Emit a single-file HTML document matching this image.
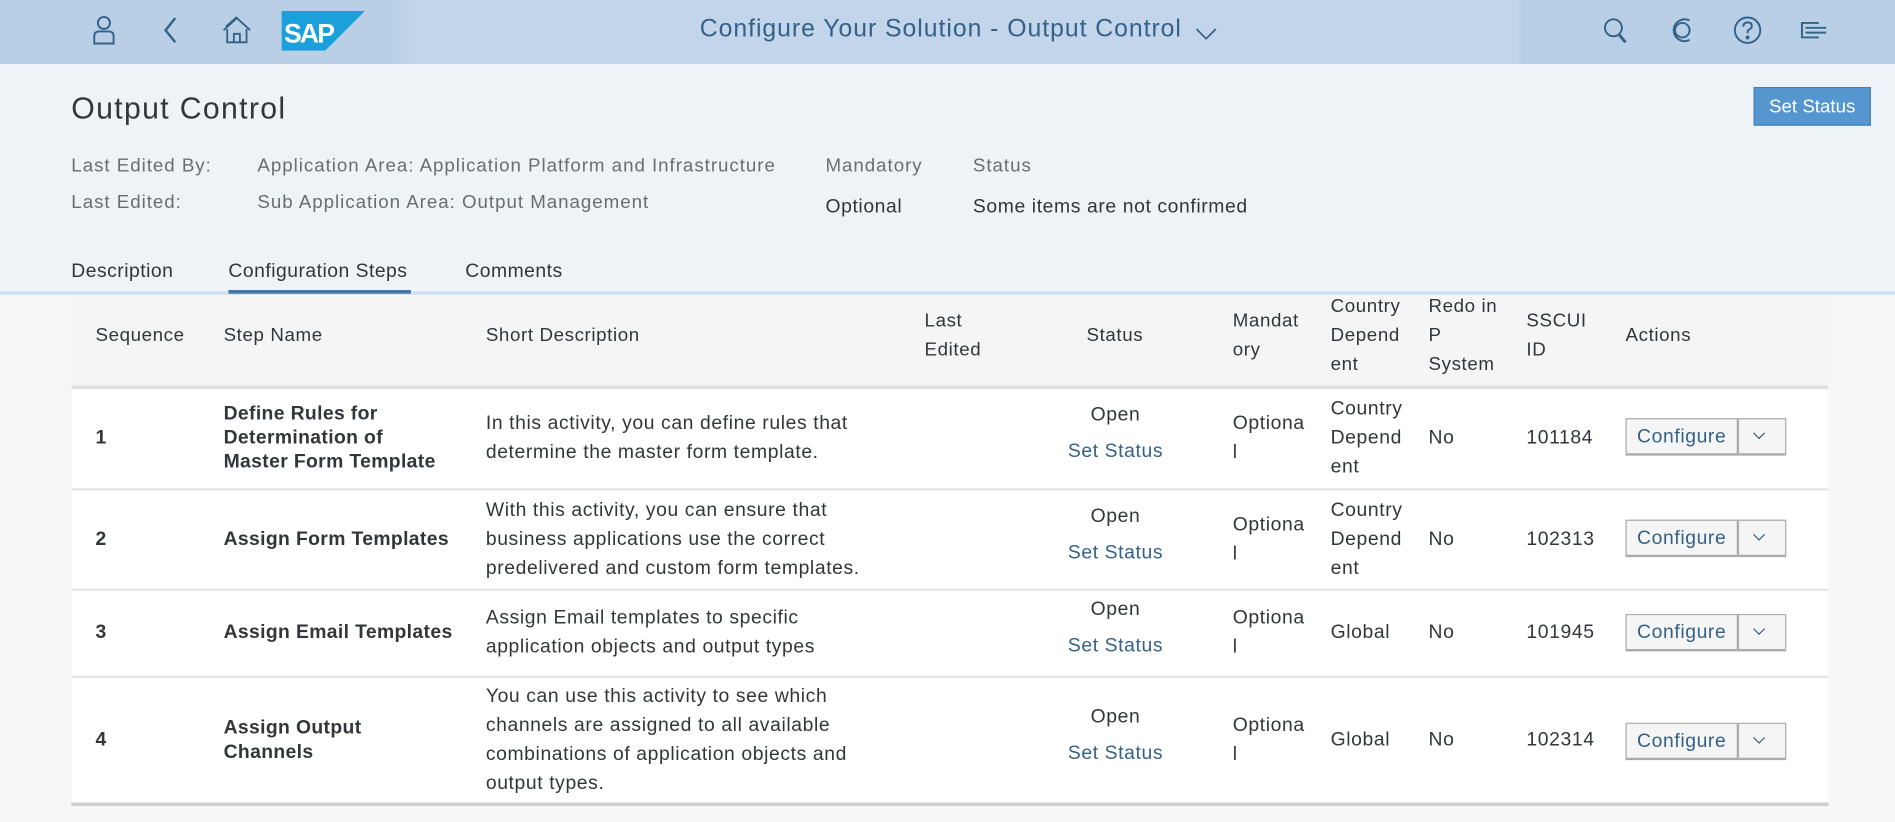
<!DOCTYPE html>
<html><head><meta charset="utf-8"><style>
*{margin:0;padding:0;box-sizing:border-box}
html,body{width:1895px;height:822px;overflow:hidden;background:#f7f7f7;font-family:"Liberation Sans",Arial,sans-serif;color:#32363a}
#w{position:absolute;left:0;top:0;width:1568px;height:680px;transform:scale(1.20855);transform-origin:0 0;background:#f7f7f7;letter-spacing:0.5px}
.a{position:absolute;white-space:nowrap}
#hdr{position:absolute;left:0;top:0;width:1568px;height:53px;background:linear-gradient(90deg,#b9cfe6 0,#b9cfe6 325px,#c2d5ea 340px,#c2d5ea 1255px,#b9cfe6 1260px)}
.ic{position:absolute;top:12px}
#obj{position:absolute;left:0;top:53px;width:1568px;height:190px;background:#eef3f8}
.lbl{font-size:15.5px;color:#6a6d70;letter-spacing:0.8px}
.tab{font-size:16px;color:#32363a;top:216px;letter-spacing:0.4px}
#tbl{position:absolute;left:59px;top:246px;width:1454px;height:421px;background:#fff}
.th{font-size:15.5px;color:#32363a;line-height:24px;position:absolute;white-space:nowrap}
.row{position:absolute;left:0;width:1454px;border-bottom:2px solid #e5e5e5}
.c{position:absolute;top:0;height:100%;display:flex;align-items:center;font-size:16px;line-height:24px;white-space:nowrap}
.st{flex-direction:column;justify-content:center;align-items:center;top:-4px}
.b{font-weight:bold;line-height:20px;font-size:16px;letter-spacing:0.3px}
.lnk{color:#346187}
.btn{position:absolute;left:1286px;width:133px;height:31px;border:1px solid #ababab;border-bottom:2px solid #ababab;background:#f5f5f5;color:#346187;font-size:16px}
.btn span{position:absolute;left:0;top:0;width:93px;height:28px;line-height:29px;text-align:center;border-right:2px solid #ababab}
.btn i{position:absolute;left:106px;top:8px;width:7px;height:7px;border-right:1px solid #346187;border-bottom:1px solid #346187;transform:rotate(45deg);}
</style></head><body><div id="w">
<div id="hdr">
<svg class="ic" style="left:76px" width="20" height="26" viewBox="0 0 20 26" fill="none" stroke="#346187" stroke-width="1.6"><circle cx="10" cy="7" r="5"/><path d="M2 24 V18 Q2 14 6 14 H14 Q18 14 18 18 V24 Z"/></svg>
<svg class="ic" style="left:134px" width="14" height="26" viewBox="0 0 14 26" fill="none" stroke="#346187" stroke-width="2"><path d="M11 3 L3 13 L11 23"/></svg>
<svg class="ic" style="left:184px" width="24" height="26" viewBox="0 0 24 26" fill="none" stroke="#346187" stroke-width="1.5"><path d="M1 13 L12 3 L23 13"/><path d="M4 12 V23 H20 V12"/><path d="M9.5 23 V16 H14.5 V23"/><path d="M3 10 L12 2"/></svg>
<svg style="position:absolute;left:233px;top:9px" width="69" height="33" viewBox="0 0 69 33"><path d="M0 0 H69 L36 33 H0 Z" fill="#1ba0dc"/><text x="2" y="26" font-family="Liberation Sans" font-weight="bold" font-size="22" fill="#fff" letter-spacing="-1.5">SAP</text></svg>
<div class="a" style="left:579px;top:12px;font-size:20.5px;color:#346187;letter-spacing:0.8px">Configure Your Solution - Output Control</div>
<svg class="ic" style="left:989px;top:22px" width="18" height="12" viewBox="0 0 18 12" fill="none" stroke="#346187" stroke-width="1.4"><path d="M1 2 L9 10 L17 2"/></svg>
<svg class="ic" style="left:1326px" width="22" height="26" viewBox="0 0 22 26" fill="none" stroke="#346187" stroke-width="1.6"><circle cx="9" cy="11" r="7"/><path d="M14 17 L19 23" stroke-width="2.4"/></svg>
<svg class="ic" style="left:1381px" width="22" height="26" viewBox="0 0 22 26" fill="none" stroke="#346187" stroke-width="1.6"><path d="M17 5 A9 9 0 1 0 17 21"/><circle cx="11" cy="13" r="6"/></svg>
<svg class="ic" style="left:1434px" width="24" height="26" viewBox="0 0 24 26" fill="none" stroke="#346187" stroke-width="1.6"><circle cx="12" cy="13" r="10.5"/><path d="M8.5 10 Q8.5 6.5 12 6.5 Q15.5 6.5 15.5 9.5 Q15.5 11.5 13 12.5 Q12 13 12 15.5"/><circle cx="12" cy="19" r=".8" fill="#346187"/></svg>
<svg class="ic" style="left:1489px" width="24" height="26" viewBox="0 0 24 26" fill="none" stroke="#346187" stroke-width="1.6"><path d="M16 7 H2 V19 H16"/><path d="M5 11 H22 M5 15 H22" /></svg>
</div>
<div id="obj">
<div class="a" style="left:59px;top:23px;font-size:25px;color:#32363a;letter-spacing:1.1px">Output Control</div>
<div class="a" style="left:1451px;top:19px;width:97px;height:32px;background:#5496cd;border:1px solid #3e7fbd;color:#fff;font-size:15.5px;text-align:center;line-height:32px;letter-spacing:0">Set Status</div>
<div class="a lbl" style="left:59px;top:76px">Last Edited By:</div>
<div class="a lbl" style="left:59px;top:106px">Last Edited:</div>
<div class="a lbl" style="left:213px;top:76px">Application Area: Application Platform and Infrastructure</div>
<div class="a lbl" style="left:213px;top:106px">Sub Application Area: Output Management</div>
<div class="a lbl" style="left:683px;top:76px">Mandatory</div>
<div class="a lbl" style="left:805px;top:76px">Status</div>
<div class="a" style="left:683px;top:110px;font-size:16px">Optional</div>
<div class="a" style="left:805px;top:110px;font-size:16px">Some items are not confirmed</div>
</div>
<div class="a tab" style="left:59px">Description</div>
<div class="a tab" style="left:189px">Configuration Steps</div>
<div class="a tab" style="left:385px">Comments</div>
<div class="a" style="left:0;top:241px;width:1568px;height:3px;background:#d3e1ef"></div>
<div class="a" style="left:189px;top:240px;width:151px;height:3px;background:#3f74a8"></div>
<div id="tbl">
<div class="a" style="left:0;top:0;width:1454px;height:76px;background:#f5f5f5;border-bottom:3px solid #e0e0e0"></div>
<div class="th" style="left:20px;top:20px">Sequence</div>
<div class="th" style="left:126px;top:20px">Step Name</div>
<div class="th" style="left:343px;top:20px">Short Description</div>
<div class="th" style="left:706px;top:8px">Last<br>Edited</div>
<div class="th" style="left:840px;top:20px">Status</div>
<div class="th" style="left:961px;top:8px">Mandat<br>ory</div>
<div class="th" style="left:1042px;top:-4px">Country<br>Depend<br>ent</div>
<div class="th" style="left:1123px;top:-4px">Redo in<br>P<br>System</div>
<div class="th" style="left:1204px;top:8px">SSCUI<br>ID</div>
<div class="th" style="left:1286px;top:20px">Actions</div>

<div class="row" style="top:76px;height:84px">
<div class="c b" style="left:20px">1</div>
<div class="c b" style="left:126px">Define Rules for<br>Determination of<br>Master Form Template</div>
<div class="c" style="left:343px">In this activity, you can define rules that<br>determine the master form template.</div>
<div class="c st" style="left:806px;width:116px"><div>Open</div><div class="lnk" style="margin-top:6px">Set Status</div></div>
<div class="c" style="left:961px">Optiona<br>l</div>
<div class="c" style="left:1042px">Country<br>Depend<br>ent</div>
<div class="c" style="left:1123px">No</div>
<div class="c" style="left:1204px">101184</div>
<div class="btn" style="top:24px"><span>Configure</span><i></i></div>
</div>
<div class="row" style="top:160px;height:83px">
<div class="c b" style="left:20px">2</div>
<div class="c b" style="left:126px">Assign Form Templates</div>
<div class="c" style="left:343px">With this activity, you can ensure that<br>business applications use the correct<br>predelivered and custom form templates.</div>
<div class="c st" style="left:806px;width:116px"><div>Open</div><div class="lnk" style="margin-top:6px">Set Status</div></div>
<div class="c" style="left:961px">Optiona<br>l</div>
<div class="c" style="left:1042px">Country<br>Depend<br>ent</div>
<div class="c" style="left:1123px">No</div>
<div class="c" style="left:1204px">102313</div>
<div class="btn" style="top:24px"><span>Configure</span><i></i></div>
</div>
<div class="row" style="top:243px;height:72px">
<div class="c b" style="left:20px">3</div>
<div class="c b" style="left:126px">Assign Email Templates</div>
<div class="c" style="left:343px">Assign Email templates to specific<br>application objects and output types</div>
<div class="c st" style="left:806px;width:116px"><div>Open</div><div class="lnk" style="margin-top:6px">Set Status</div></div>
<div class="c" style="left:961px">Optiona<br>l</div>
<div class="c" style="left:1042px">Global</div>
<div class="c" style="left:1123px">No</div>
<div class="c" style="left:1204px">101945</div>
<div class="btn" style="top:19px"><span>Configure</span><i></i></div>
</div>
<div class="row" style="top:315px;height:106px;border-bottom:3px solid #d0d0d0">
<div class="c b" style="left:20px">4</div>
<div class="c b" style="left:126px">Assign Output<br>Channels</div>
<div class="c" style="left:343px">You can use this activity to see which<br>channels are assigned to all available<br>combinations of application objects and<br>output types.</div>
<div class="c st" style="left:806px;width:116px"><div>Open</div><div class="lnk" style="margin-top:6px">Set Status</div></div>
<div class="c" style="left:961px">Optiona<br>l</div>
<div class="c" style="left:1042px">Global</div>
<div class="c" style="left:1123px">No</div>
<div class="c" style="left:1204px">102314</div>
<div class="btn" style="top:37px"><span>Configure</span><i></i></div>
</div>
</div>
</div></body></html>
